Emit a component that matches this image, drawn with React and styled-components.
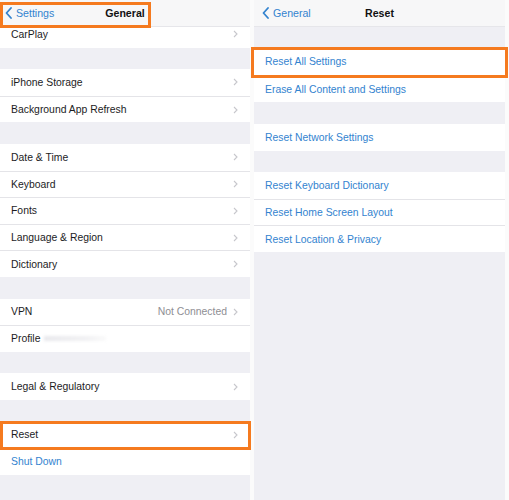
import styled, { createGlobalStyle } from "styled-components";

const GlobalStyle = createGlobalStyle`
  html, body {
    margin: 0;
    padding: 0;
    background: #fbfbfb;
  }
  body {
    font-family: "Liberation Sans", Arial, sans-serif;
  }
`;

const BLUE = "#3383cf";
const ORANGE = "#f57a1f";

const Screen = styled.div`
  width: 509px;
  height: 500px;
  display: flex;
  gap: 4px;
  background: #fbfbfb;
  overflow: hidden;
`;

const Panel = styled.div`
  width: ${(p) => p.$width}px;
  flex-shrink: 0;
  display: flex;
  flex-direction: column;
  background: #efeff4;
`;

const NavBar = styled.div`
  position: relative;
  height: 27px;
  flex-shrink: 0;
  display: grid;
  grid-template-columns: 1fr auto 1fr;
  align-items: center;
  padding: 0 0 0 ${(p) => p.$pad}px;
  background: #f7f7f8;
  border-bottom: 1px solid #e6e6ea;
  box-sizing: border-box;
  z-index: 2;
`;

const BackLink = styled.div`
  display: flex;
  align-items: center;
  gap: 4px;
  color: ${BLUE};
  font-size: 10.6px;
`;

const NavTitle = styled.div`
  font-size: 10.6px;
  font-weight: bold;
  color: #111;
  transform: translateX(-${(p) => p.$pad / 2}px);
`;

const NavBox = styled.div`
  position: absolute;
  left: 0;
  top: 2px;
  width: 151px;
  height: 26px;
  border: 3px solid ${ORANGE};
  box-sizing: border-box;
`;

const Gap = styled.div`
  height: ${(p) => p.$h}px;
  flex-shrink: 0;
`;

const Group = styled.div`
  background: #fff;
  display: flex;
  flex-direction: column;
  flex-shrink: 0;
  margin-top: ${(p) => p.$under || 0}px;
`;

const Row = styled.div`
  position: relative;
  height: ${(p) => p.$h || 26.6}px;
  display: flex;
  align-items: center;
  padding: 0 12px 0 11px;
  font-size: 10.4px;
  color: ${(p) => (p.$blue ? BLUE : "#1c1c1e")};
  box-sizing: border-box;

  & + & {
    border-top: 1px solid #e4e4e8;
  }

  &::after {
    content: "";
    display: ${(p) => (p.$box ? "block" : "none")};
    position: absolute;
    top: -1px;
    bottom: -2px;
    left: ${(p) => p.$boxLeft ?? 0}px;
    right: ${(p) => p.$boxRight ?? 0}px;
    border: 3px solid ${ORANGE};
    z-index: 3;
  }
`;

const Label = styled.span`
  flex: 1;
  display: flex;
  align-items: center;
`;

const Detail = styled.span`
  color: #8e8e93;
  margin-right: 6px;
`;

const Smudge = styled.span`
  display: inline-block;
  width: 62px;
  height: 5px;
  margin-left: 4px;
  background: linear-gradient(90deg, #e8e8ec, #f1f1f3 70%, #fafafa);
  filter: blur(1.5px);
`;

const Chevron = () => (
  <svg width="5" height="8" viewBox="0 0 5 8">
    <path d="M1 1l3 3-3 3" fill="none" stroke="#c7c7cc" strokeWidth="1.1" />
  </svg>
);

const BackChevron = () => (
  <svg width="7" height="12" viewBox="0 0 7 12">
    <path d="M6 1L1.5 6 6 11" fill="none" stroke={BLUE} strokeWidth="1.8" strokeLinecap="round" strokeLinejoin="round" />
  </svg>
);

const Item = ({ label, detail, chevron = true, children, ...rest }) => (
  <Row {...rest}>
    <Label>
      {label}
      {children}
    </Label>
    {detail && <Detail>{detail}</Detail>}
    {chevron && <Chevron />}
  </Row>
);

const App = () => (
  <>
    <GlobalStyle />
    <Screen>
      <Panel $width={250}>
        <NavBar $pad={5}>
          <BackLink>
            <BackChevron />
            Settings
          </BackLink>
          <NavTitle $pad={5}>General</NavTitle>
          <span />
          <NavBox />
        </NavBar>
        {/* scrolled list: CarPlay sits partly under the nav bar */}
        <Group $under={-6}>
          <Item label="CarPlay" />
        </Group>
        <Gap $h={21.6} />
        <Group>
          <Item label="iPhone Storage" />
          <Item label="Background App Refresh" />
        </Group>
        <Gap $h={21.6} />
        <Group>
          <Item label="Date & Time" />
          <Item label="Keyboard" />
          <Item label="Fonts" />
          <Item label="Language & Region" />
          <Item label="Dictionary" />
        </Group>
        <Gap $h={21.6} />
        <Group>
          <Item label="VPN" detail="Not Connected" />
          <Item label="Profile" chevron={false}>
            <Smudge />
          </Item>
        </Group>
        <Gap $h={21.6} />
        <Group>
          <Item label="Legal & Regulatory" />
        </Group>
        <Gap $h={21.6} />
        <Group>
          <Item label="Reset" $box $boxLeft={0} $boxRight={-1} />
          <Item label="Shut Down" $blue chevron={false} />
        </Group>
      </Panel>

      <Panel $width={251}>
        <NavBar $pad={8}>
          <BackLink>
            <BackChevron />
            General
          </BackLink>
          <NavTitle $pad={8}>Reset</NavTitle>
          <span />
        </NavBar>
        <Gap $h={20.5} />
        <Group>
          <Item label="Reset All Settings" $blue chevron={false} $h={28} $box $boxLeft={-3} $boxRight={-3} />
          <Item label="Erase All Content and Settings" $blue chevron={false} />
        </Group>
        <Gap $h={22} />
        <Group>
          <Item label="Reset Network Settings" $blue chevron={false} />
        </Group>
        <Gap $h={21.6} />
        <Group>
          <Item label="Reset Keyboard Dictionary" $blue chevron={false} />
          <Item label="Reset Home Screen Layout" $blue chevron={false} />
          <Item label="Reset Location & Privacy" $blue chevron={false} />
        </Group>
      </Panel>
    </Screen>
  </>
);

export default App;
